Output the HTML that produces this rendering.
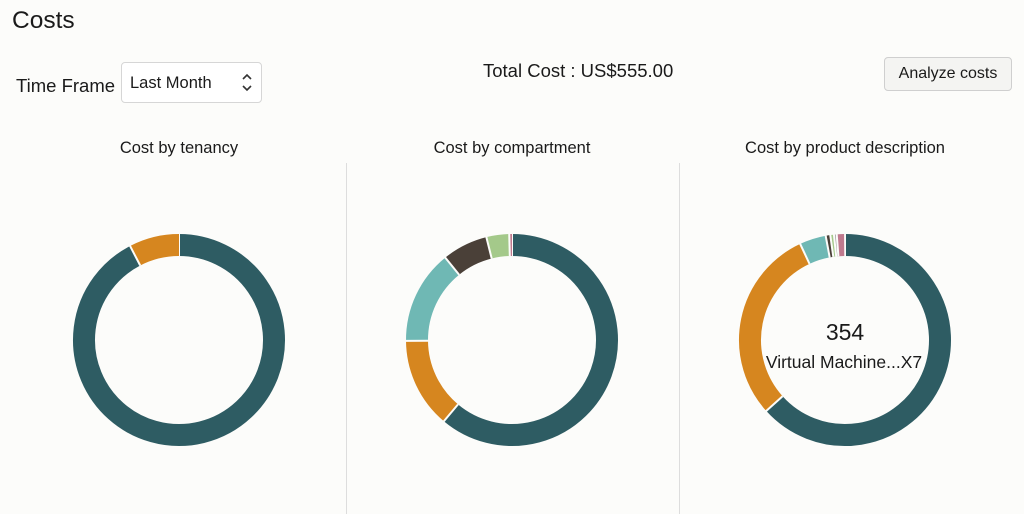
<!DOCTYPE html>
<html><head><meta charset="utf-8"><style>
body{margin:0;width:1024px;height:514px;background:#fcfcfa;font-family:"Liberation Sans",sans-serif;color:#1a1a1a;position:relative;overflow:hidden}
.a{position:absolute;white-space:nowrap}
</style></head><body>
<div class="a" style="left:12px;top:7px;font-size:24.5px">Costs</div>
<div class="a" style="left:16px;top:75px;font-size:18.5px">Time Frame</div>
<div class="a" style="left:121px;top:62px;width:141px;height:41px;border:1px solid #d6d6d6;border-radius:4px;background:#fff;box-sizing:border-box"></div>
<div class="a" style="left:130px;top:74px;font-size:16.5px">Last Month</div>
<svg class="a" style="left:241px;top:72px" width="12" height="22"><path d="M2 7l4-4 4 4M2 14l4 4 4-4" fill="none" stroke="#333" stroke-width="1.6"/></svg>
<div class="a" style="left:483px;top:60px;font-size:18.5px">Total Cost : US$555.00</div>
<div class="a" style="left:884px;top:57px;width:128px;height:34px;border:1px solid #cfcfcf;border-radius:4px;background:#f4f4f2;box-sizing:border-box;font-size:16px;text-align:center;line-height:32px">Analyze costs</div>
<div class="a" style="left:0;width:358px;text-align:center;top:139px;font-size:16.5px">Cost by tenancy</div>
<div class="a" style="left:333px;width:358px;text-align:center;top:139px;font-size:16.5px">Cost by compartment</div>
<div class="a" style="left:666px;width:358px;text-align:center;top:139px;font-size:16.5px">Cost by product description</div>
<div class="a" style="left:346px;top:163px;width:1px;height:351px;background:#ddd"></div>
<div class="a" style="left:679px;top:163px;width:1px;height:351px;background:#ddd"></div>
<svg id="s" class="a" style="left:0;top:0" width="1024" height="514"></svg>
<div class="a" style="left:745px;width:200px;text-align:center;top:319px;font-size:23px">354</div>
<div class="a" style="left:744px;width:200px;text-align:center;top:352px;font-size:17.5px">Virtual Machine...X7</div>
<script>
var D="#2e5c63",O="#d6861f",T="#6fb8b4",B="#4a4038",G="#a4c98a",P="#c07a8e",Y="#9a9a9a";
var charts=[[179,[[0,332.5,D],[332.5,360,O]]],
[512,[[0,220,D],[220,269.5,O],[269.5,321,T],[321,346,B],[346,358.5,G],[358.5,360,P]]],
[845,[[0,228,D],[228,335,O],[335,349.5,T],[349.5,352,B],[352,354,G],[354,355.5,Y],[355.5,359.5,P]]]];
var h="";
charts.forEach(function(c){var cx=c[0],cy=340,r=95;c[1].forEach(function(s){
var a0=s[0]*Math.PI/180,a1=s[1]*Math.PI/180;
var x0=cx+r*Math.sin(a0),y0=cy-r*Math.cos(a0),x1=cx+r*Math.sin(a1),y1=cy-r*Math.cos(a1);
var l=(s[1]-s[0])>180?1:0;
h+='<path d="M'+x0+' '+y0+'A'+r+' '+r+' 0 '+l+' 1 '+x1+' '+y1+'" fill="none" stroke="'+s[2]+'" stroke-width="22"/>';
h+='<line x1="'+(cx+84*Math.sin(a0))+'" y1="'+(cy-84*Math.cos(a0))+'" x2="'+(cx+107*Math.sin(a0))+'" y2="'+(cy-107*Math.cos(a0))+'" stroke="#fcfcfa" stroke-width="2"/>';
});});
document.getElementById("s").innerHTML=h;
</script>
</body></html>
